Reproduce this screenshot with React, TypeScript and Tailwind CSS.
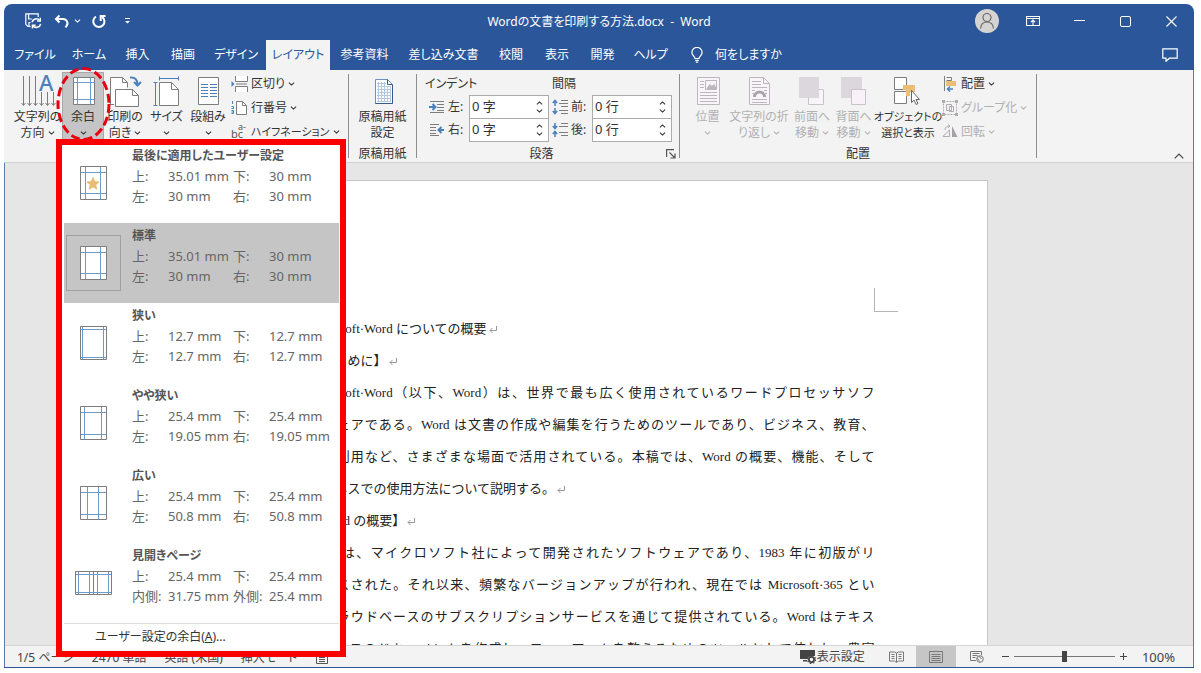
import type { ReactNode } from "react";

const GRAY = "#7d7d7d";
const BLUE = "#4a80bb";
const FADED = "#bdb6bd";

function Chevron({ className = "" }: { className?: string }) {
  return (
    <svg className={`inline-block h-1 w-[7px] shrink-0 ${className}`} viewBox="0 0 7 4" fill="none" stroke="currentColor" strokeWidth="1.1">
      <path d="M.9.6 3.5 3.1 6.1.6" />
    </svg>
  );
}

function BigButton({ width, icon, lines, menu = true, selected = false, disabled = false, compact = false }: {
  width: string; icon: ReactNode; lines: string[]; menu?: boolean; selected?: boolean; disabled?: boolean; compact?: boolean;
}) {
  return (
    <button
      type="button"
      disabled={disabled}
      className={`flex h-[68px] shrink-0 flex-col items-center whitespace-nowrap leading-4 ${width} ${compact ? "text-[11px]" : ""} ${selected ? "bg-[#c5c5c5] outline outline-1 -outline-offset-1 outline-[#a8a8a8]" : ""} ${disabled ? "text-[#b1b1b1]" : "text-[#333]"}`}
    >
      <span className="block h-[37px] shrink-0">{icon}</span>
      <span className="block">{lines[0]}</span>
      <span className="flex h-4 items-center justify-center gap-[3px]">
        {lines[1]}
        {menu && <Chevron />}
      </span>
    </button>
  );
}

function SmallButton({ icon, label, disabled = false, compact = false }: { icon: ReactNode; label: string; disabled?: boolean; compact?: boolean }) {
  return (
    <button type="button" disabled={disabled} className={`flex h-6 items-center gap-[3px] whitespace-nowrap ${compact ? "text-[11px]" : ""} ${disabled ? "text-[#b1b1b1]" : "text-[#333]"}`}>
      {icon}
      <span>{label}</span>
      <Chevron />
    </button>
  );
}

function Group({ name, label, width, launcher = false, children }: { name: string; label?: string; width: string; launcher?: boolean; children: ReactNode }) {
  return (
    <section aria-label={name} className={`flex shrink-0 pt-0.5 ${width}`}>
      <div className="flex min-w-0 grow flex-col">
        <div className="flex h-[74px] shrink-0">{children}</div>
        <div className="flex h-4 shrink-0 items-center leading-4">
          <span className="grow text-center">{label}</span>
          {launcher && (
            <button type="button" aria-label={`${name}の設定`} className="mr-[3px]">
              <svg className="size-[10px]" viewBox="0 0 10 10" fill="none" stroke="#555" strokeWidth="1.2">
                <path d="M.6 8V.6H8M3.5 3.5l5 5M9 4.5V9H4.5" />
              </svg>
            </button>
          )}
        </div>
      </div>
      <div className="mb-1 mt-0.5 w-px bg-[#8d8d8d]" />
    </section>
  );
}

function Field({ id, icon, label, value, className = "" }: { id: string; icon: ReactNode; label: string; value: string; className?: string }) {
  return (
    <div className={`flex items-center ${className}`}>
      <label htmlFor={id} className="flex w-10 items-center gap-[3px]">{icon}{label}</label>
      <div className="flex h-6 w-20 border border-[#ababab] bg-white">
        <input id={id} defaultValue={value} className="w-full min-w-0 bg-transparent pl-0.5 text-[13px] text-[#333] outline-none" />
        <span className="flex w-[18px] shrink-0 flex-col items-center justify-between py-1">
          <button type="button" aria-label={`${label}増やす`} className="flex h-1.5 items-center"><Chevron className="rotate-180" /></button>
          <button type="button" aria-label={`${label}減らす`} className="flex h-1.5 items-center"><Chevron /></button>
        </span>
      </div>
    </div>
  );
}

const tabs: [string, string][] = [
  ["ファイル", "w-14"], ["ホーム", "w-[52px]"], ["挿入", "w-[45px]"], ["描画", "w-[46px]"], ["デザイン", "w-[60px]"],
  ["レイアウト", "w-16"], ["参考資料", "w-[69px]"], ["差し込み文書", "w-[89px]"], ["校閲", "w-[46px]"],
  ["表示", "w-[46px]"], ["開発", "w-[45px]"], ["ヘルプ", "w-[51px]"],
];

function TitleBar() {
  return (
    <div className="grid h-[34px] grid-cols-[1fr_auto_1fr] items-center">
      <div className="flex items-center pl-[21px]">
        <button type="button" aria-label="上書き保存">
          <svg className="h-4 w-[17px]" viewBox="0 0 17 16" fill="none" stroke="currentColor" strokeWidth="1.2">
            <path d="M5.500 13.500H3L.8 11.300V.8h12.400v3.200M3.600 1v5h3.200M4 13.300V9.500h1.500" />
            <path d="M7 9.200a4.400 4.400 0 0 1 7.800-1.600M15.600 10.800a4.400 4.400 0 0 1-7.900 1.700" strokeWidth="1.500" />
            <path d="M15.300 4.800v3.200h-3.200M7.400 15.400v-3.200h3.200" strokeWidth="1.400" />
          </svg>
        </button>
        <button type="button" aria-label="元に戻す" className="ml-3">
          <svg className="h-[15px] w-4" viewBox="0 0 16 15" fill="none" stroke="currentColor" strokeWidth="2">
            <path d="M5.500 1.500 2 5l3.500 3.500M2.500 5h6.500a4.300 4.300 0 0 1 3.500 7l-1 1.300" />
          </svg>
        </button>
        <Chevron className="ml-1" />
        <button type="button" aria-label="繰り返し" className="ml-2.5">
          <svg className="h-[15px] w-4" viewBox="0 0 16 15" fill="none" stroke="currentColor" strokeWidth="2">
            <path d="M5 2.600A5.600 5.600 0 1 0 11 2.800" />
            <path d="M14.500 2H9.700v5" />
          </svg>
        </button>
        <button type="button" aria-label="クイック アクセス ツール バーのユーザー設定" className="ml-[17px]">
          <svg className="h-2 w-[7px]" viewBox="0 0 7 8"><path d="M1 1h5v1H1zM1 4h5L3.500 6.500z" fill="currentColor" /></svg>
        </button>
      </div>
      <h1 className="whitespace-pre pt-0.5">{"Wordの文書を印刷する方法.docx  -  Word"}</h1>
      <div className="flex items-center justify-end">
        <button type="button" aria-label="アカウント" className="mr-[11px]">
          <svg className="size-6" viewBox="0 0 24 24" fill="none" stroke="#666" strokeWidth="1.200">
            <circle cx="12" cy="12" r="12" fill="#d6d4d2" stroke="none" />
            <circle cx="12" cy="8.500" r="4" />
            <path d="M5.500 19.500c.3-4 2.800-6.500 6.500-6.500s6.200 2.500 6.500 6.500" />
          </svg>
        </button>
        <button type="button" aria-label="リボンの表示オプション" className="flex w-[46px] justify-center">
          <svg className="h-3 w-[14px]" viewBox="0 0 14 12" fill="none" stroke="currentColor"><path d="M.5 1.500h13v9H.5zM.5 3.500h13M7 10V5M4.800 7.200 7 5l2.200 2.200" strokeWidth="1.100" /></svg>
        </button>
        <button type="button" aria-label="最小化" className="flex w-[46px] justify-center">
          <svg className="h-3 w-[11px]" viewBox="0 0 11 12" stroke="currentColor"><path d="M0 5.500h11" /></svg>
        </button>
        <button type="button" aria-label="最大化" className="flex w-[46px] justify-center">
          <svg className="size-[11px]" viewBox="0 0 11 11" fill="none" stroke="currentColor"><rect x=".5" y=".5" width="10" height="10" rx="1.500" /></svg>
        </button>
        <button type="button" aria-label="閉じる" className="flex w-[46px] justify-center">
          <svg className="size-[11px]" viewBox="0 0 11 11" stroke="currentColor" strokeWidth="1.100"><path d="m.5.5 10 10M10.500.5l-10 10" /></svg>
        </button>
      </div>
    </div>
  );
}

function TabBar() {
  return (
    <nav className="flex h-8 items-end pl-[3px]">
      {tabs.map(([name, width]) => (
        <button
          key={name}
          type="button"
          className={`h-[30px] shrink-0 whitespace-nowrap text-center ${width} ${name === "レイアウト" ? "bg-[#f3f3f3] text-[#2b579a]" : ""}`}
        >
          {name}
        </button>
      ))}
      <button type="button" className="ml-[15px] flex h-[30px] items-center gap-3 whitespace-nowrap">
        <svg className="h-4 w-3" viewBox="0 0 12 16" fill="none" stroke="currentColor" strokeWidth="1.200">
          <path d="M4 11.500C4 9.500.9 8.500.9 5.500a5.100 5.100 0 0 1 10.200 0c0 3-3.100 4-3.100 6zM4.200 13.300h3.600M4.800 15.200h2.400" />
        </svg>
        何をしますか
      </button>
      <button type="button" aria-label="コメント" className="ml-auto mr-4 flex h-[30px] items-center">
        <svg className="h-[14px] w-4" viewBox="0 0 16 14" fill="none" stroke="currentColor" strokeWidth="1.200"><path d="M.8.8h14.400v9.400H7.500L4 13.300v-3.100H.8z" /></svg>
      </button>
    </nav>
  );
}

function PageSetupGroup() {
  return (
    <Group name="ページ設定" width="w-[345px]">
      <div className="flex pl-[9px]">
        <BigButton width="w-[49px]" lines={["文字列の", "方向"]} icon={
          <svg className="h-[37px] w-[50px]" viewBox="0 0 50 37" fill="none" stroke={GRAY} strokeWidth="1">
            <path d="M10.500 4v29M16.500 4v29M22.500 4v29M28.500 20v13M34.500 20v13M40.500 20v13" />
            <path d="m8.500 31 2 2.500 2-2.500m2 0 2 2.500 2-2.500m2 0 2 2.500 2-2.500m2 0 2 2.500 2-2.500m2 0 2 2.500 2-2.500m2 0 2 2.500 2-2.500" />
            <text x="26" y="19" fontSize="22" fontWeight="500" fill={BLUE} stroke="none">A</text>
          </svg>
        } />
        <BigButton width="w-[42px]" lines={["余白"]} selected icon={
          <svg className="h-[37px] w-[42px]" viewBox="0 0 42 37" fill="none">
            <path d="M11.500 5.500h21v27h-21z" fill="#fff" stroke={GRAY} />
            <path d="M15.500 6v26M28.500 6v26M12 10.500h20M12 27.500h20" stroke="#6c9bcb" />
          </svg>
        } />
        <BigButton width="w-[42px]" lines={["印刷の", "向き"]} icon={
          <svg className="h-[37px] w-[42px]" viewBox="0 0 42 37" fill="none" stroke={GRAY}>
            <path d="M10 32.500H6.500v-27h12l5 5v5" fill="#fff" />
            <path d="M18.500 5.500v5h5" />
            <path d="M11.500 17.500h17l6 6v11h-23z" fill="#fff" />
            <path d="M28.500 17.500v6h6" />
            <path d="M26 5.500c5-.5 7.500 2 7.500 7M30 10l3.500 3.500L37 10" stroke={BLUE} strokeWidth="2" />
          </svg>
        } />
        <BigButton width="w-[41px]" lines={["サイズ"]} icon={
          <svg className="h-[37px] w-[41px]" viewBox="0 0 41 37" fill="none" stroke={GRAY}>
            <path d="M13.500 10.500h12l7 7v16h-19z" fill="#fff" />
            <path d="M25.500 10.500v7h7" />
            <path d="M13.500 4.500v4M32.500 4.500v4M14 6.500h18M7.500 10.500h4M7.500 33.500h4M9.500 11v22" stroke={BLUE} />
          </svg>
        } />
        <BigButton width="w-[42px]" lines={["段組み"]} icon={
          <svg className="h-[37px] w-[42px]" viewBox="0 0 42 37" fill="none">
            <path d="M11.500 5.500h20v27h-20z" fill="#fff" stroke={GRAY} />
            <path d="M14 12.500h7M14 15.500h7M14 18.500h7M14 21.500h7M14 24.500h7M23 12.500h7M23 15.500h7M23 18.500h7M23 21.500h7M23 24.500h7" stroke={BLUE} />
          </svg>
        } />
        <div className="flex flex-col pl-0.5">
          <SmallButton label="区切り" icon={
            <svg className="h-4 w-[17px]" viewBox="0 0 17 16" fill="none" stroke={GRAY}>
              <path d="M4.500 0v5.500h12V0M4.500 16v-5.500h12V16" fill="#fff" /><path d="M5 8h11" />
              <path d="M.5 5v6l3-3z" fill={BLUE} stroke="none" />
            </svg>
          } />
          <SmallButton label="行番号" icon={
            <svg className="h-4 w-[17px]" viewBox="0 0 17 16" fill="none" stroke={GRAY}>
              <path d="M5.500 1.500h6l4 4v9h-10z" fill="#fff" /><path d="M11.500 1.500v4h4" />
              <path d="M1.500 1v3M.5 6.500h2v2h-2M.5 10.500h2v3h-2M.5 12h2" stroke={BLUE} />
            </svg>
          } />
          <SmallButton label="ハイフネーション" compact icon={
            <svg className="h-4 w-[17px]" viewBox="0 0 17 16" fill="#555">
              <text x="0" y="14" fontSize="11">bc</text><text x="7" y="6" fontSize="9">a-</text>
            </svg>
          } />
        </div>
      </div>
    </Group>
  );
}

function ParagraphGroup() {
  return (
    <Group name="段落" label="段落" width="w-[263px]" launcher>
      <div className="pl-2">
        <div className="h-[21px] leading-6">インデント</div>
        <Field id="indent-left" label="左:" value="0 字" className="mt-0.5 pl-1" icon={
          <svg className="h-3 w-4" viewBox="0 0 16 12" fill="none" stroke={GRAY}>
            <path d="M1 .5h14M8 3.500h7M8 6.500h7M8 9.500h7M1 11.500h14" /><path d="M0 6h6M3.500 3 6.500 6l-3 3" stroke={BLUE} strokeWidth="2" />
          </svg>
        } />
        <Field id="indent-right" label="右:" value="0 字" className="-mt-px pl-1" icon={
          <svg className="h-3 w-4" viewBox="0 0 16 12" fill="none" stroke={GRAY}>
            <path d="M1 .5h9M1 3.500h6M1 6.500h6M1 9.500h6M1 11.500h9" /><path d="M15 6H9.500M12.500 3l-3 3 3 3" stroke={BLUE} strokeWidth="2" />
          </svg>
        } />
      </div>
      <div className="pl-[3px]">
        <div className="h-[21px] leading-6">間隔</div>
        <Field id="space-before" label="前:" value="0 行" className="mt-0.5" icon={
          <svg className="h-4 w-4" viewBox="0 0 16 16" fill="none" stroke={GRAY}>
            <path d="M9 1.500h7M7 4.500h9M9 7.500h7M7 11.500h9M9 14.500h7" /><path d="M3 7V1.500M.8 4 3 1.500 5.200 4M3 9v5.500M.8 12 3 14.500 5.200 12" stroke={BLUE} strokeWidth="1.500" />
          </svg>
        } />
        <Field id="space-after" label="後:" value="0 行" className="-mt-px" icon={
          <svg className="h-4 w-4" viewBox="0 0 16 16" fill="none" stroke={GRAY}>
            <path d="M9 1.500h7M7 4.500h9M7 10.500h9M9 13.500h7" /><path d="M3 1v5.500M.8 4 3 6.500 5.200 4M3 15V9.500M.8 12 3 9.500 5.200 12" stroke={BLUE} strokeWidth="1.500" />
          </svg>
        } />
      </div>
    </Group>
  );
}

function ArrangeGroup() {
  return (
    <Group name="配置" label="配置" width="w-[357px]">
      <div className="flex pl-2">
        <BigButton width="w-[39px]" disabled lines={["位置"]} icon={
          <svg className="h-[37px] w-[38px]" viewBox="0 0 38 37" fill="none" stroke={FADED}>
            <path d="M8.500 5.500h22v27h-22z" fill="#f8f5f8" /><path d="M16.500 8.500h11v9h-11z" />
            <path d="m18 16.500 3-4 2 2 2-2 2 4z" fill={FADED} />
            <path d="M11 9.500h4M11 12.500h4M11 15.500h4M11 20.500h17M11 23.500h17M11 26.500h17M11 29.500h17" />
          </svg>
        } />
        <BigButton width="w-[64px]" disabled lines={["文字列の折", "り返し"]} icon={
          <svg className="h-[37px] w-[63px]" viewBox="0 0 63 37" fill="none" stroke={FADED}>
            <path d="M21.500 5.500h14l6 6v21h-20z" fill="#f8f5f8" /><path d="M35.500 5.500v6h6M24 9.500h9M24 12.500h9M24 15.500h15M24 27.500h15M24 30.500h15M24 18.500h3M36 18.500h3M24 21.500h2M37 21.500h2" />
            <path d="M26.500 25a5 5 0 0 1 10 0" strokeWidth="3" stroke="#a9a4a9" />
          </svg>
        } />
        <BigButton width="w-[42px]" disabled lines={["前面へ", "移動"]} icon={
          <svg className="h-[37px] w-[42px]" viewBox="0 0 42 37" fill="none" stroke="#c9c3c9">
            <path d="M17.500 17.500h15v15h-15z" fill="#f8f5f8" /><path d="M8 5h20v21H8z" fill="#dcd7dc" stroke="none" />
          </svg>
        } />
        <BigButton width="w-[41px]" disabled lines={["背面へ", "移動"]} icon={
          <svg className="h-[37px] w-[41px]" viewBox="0 0 41 37" fill="none" stroke="#c9c3c9">
            <path d="M8 5h21v21H8z" fill="#dcd7dc" stroke="none" /><path d="M18.500 17.500h14v15h-14z" fill="#f8f2f8" />
          </svg>
        } />
        <BigButton width="w-[68px]" menu={false} compact lines={["オブジェクトの", "選択と表示"]} icon={
          <svg className="h-[37px] w-[66px]" viewBox="0 0 66 37" fill="none" stroke={GRAY}>
            <path d="M19.500 5.500h12v12h-12zM19.500 19.500h12v12h-12z" fill="#fff" />
            <path d="M28 13h12v7h-5v4h-4v-6h-3z" fill="#eabf73" stroke="none" />
            <path d="M36.500 18.500v12l2.500-2.300 2.200 4.300 1.800-1-2-4h3.500z" fill="#fff" stroke="#666" />
          </svg>
        } />
        <div className="flex flex-col">
          <SmallButton label="配置" icon={
            <svg className="h-4 w-4" viewBox="0 0 16 16" fill="none" stroke={GRAY}>
              <path d="M2.500 0v15M4.500 1.500h5v3h-5" /><path d="M4 5h10v5H4z" fill="#eabf73" stroke="none" /><path d="M11 13H5.500M8 10.500 5.500 13 8 15.500" stroke={BLUE} strokeWidth="1.500" />
            </svg>
          } />
          <SmallButton label="グループ化" disabled icon={
            <svg className="h-4 w-4" viewBox="0 0 16 16" fill="none" stroke="#b1adb1">
              <path d="M1.500 1.500h13v13h-13z" strokeDasharray="2 1" /><path d="M4.500 4.500h5v6h-5zM7.500 6.500h4v5h-4z" /><path d="M0 0h3v3H0zM13 0h3v3h-3zM0 13h3v3H0zM13 13h3v3h-3z" fill="#b1adb1" stroke="none" />
            </svg>
          } />
          <SmallButton label="回転" disabled icon={
            <svg className="h-4 w-4" viewBox="0 0 16 16" fill="none" stroke="#b1adb1">
              <path d="M.8 12.500 7.500 6v6.500zM3 6c0-3 2-4 5-4M6 .5l2 1.500-2 2" /><path d="M10 2v11h5.500z" fill="#a5a1a5" stroke="none" />
            </svg>
          } />
        </div>
      </div>
    </Group>
  );
}

function Ribbon() {
  return (
    <div className="flex h-[93px] border-b border-[#d2d2d2] bg-[#f3f3f3] text-[#333]">
      <PageSetupGroup />
      <Group name="原稿用紙" label="原稿用紙" width="w-[68px]">
        <BigButton width="w-full" menu={false} lines={["原稿用紙", "設定"]} icon={
          <svg className="h-[37px] w-[36px]" viewBox="0 0 36 37" fill="none">
            <path d="M10.500 7.500h12l5 5v19h-17z" fill="#fff" stroke="#6f8fbd" />
            <path d="M12 11.500h9M12 14.500h14M12 17.500h14M12 20.500h14M12 23.500h14M12 26.500h14M12 29.500h14M13.500 10v20M16.500 10v20M19.500 10v20M22.500 14v16M25.500 14v16" stroke="#b5c8e2" />
            <path d="M22.500 7.500v5h5M27.500 13v18.500h-17" stroke="#35588f" />
          </svg>
        } />
      </Group>
      <ParagraphGroup />
      <ArrangeGroup />
      <button type="button" aria-label="リボンを折りたたむ" className="mb-[3px] ml-auto mr-[9px] self-end">
        <svg className="h-[6px] w-[10px]" viewBox="0 0 10 6" fill="none" stroke="#444" strokeWidth="1.200"><path d="M.7 5.300 5 1l4.300 4.300" /></svg>
      </button>
    </div>
  );
}

const bodyLines: { text: string; end?: boolean }[] = [
  { text: "Microsoft·Word についての概要", end: true },
  { text: "【はじめに】", end: true },
  { text: "Microsoft·Word（以下、Word）は、世界で最も広く使用されているワードプロセッサソフ" },
  { text: "トウェアである。Word は文書の作成や編集を行うためのツールであり、ビジネス、教育、" },
  { text: "個人利用など、さまざまな場面で活用されている。本稿では、Word の概要、機能、そして" },
  { text: "ビジネスでの使用方法について説明する。", end: true },
  { text: "【Word の概要】", end: true },
  { text: "Word は、マイクロソフト社によって開発されたソフトウェアであり、1983 年に初版がリ" },
  { text: "リースされた。それ以来、頻繁なバージョンアップが行われ、現在では Microsoft·365 とい" },
  { text: "うクラウドベースのサブスクリプションサービスを通じて提供されている。Word はテキス" },
  { text: "トベースのドキュメントを作成し、フォーマットを整えるためのツールとして使われ、豊富" },
];

function ReturnMark() {
  return (
    <svg className="ml-0.5 inline-block h-2 w-2" viewBox="0 0 8 8" fill="none" stroke="#999"><path d="M7.500 0v4.500H1M3.500 2 1 4.500 3.500 7" /></svg>
  );
}

function DocumentPage() {
  return (
    <main className="flex min-h-0 grow justify-center overflow-hidden bg-[#e6e6e6] pr-[15px] pt-[17px]">
      <article className="relative h-[1118px] w-[792px] shrink-0 border border-[#c6c6c6] bg-white px-[112px] pt-[132px] font-['Liberation_Serif','Noto_Sans_CJK_JP',serif] text-[13px] font-normal leading-8 text-[#222] [font-feature-settings:normal]">
        <span className="absolute right-[89px] top-[107px] size-6 border-b border-l border-[#b5b5b5]" />
        <span className="absolute left-[89px] top-[107px] size-6 border-b border-r border-[#b5b5b5]" />
        {bodyLines.map((line) => (
          <p key={line.text} className={`whitespace-nowrap ${line.end ? "" : "text-justify [text-align-last:justify]"}`}>
            {line.text}
            {line.end && <ReturnMark />}
          </p>
        ))}
      </article>
    </main>
  );
}

function StatusBar() {
  return (
    <footer className="flex h-[22px] shrink-0 items-center whitespace-nowrap border-t border-[#d5d5d5] bg-[#f3f3f3] text-[#444]">
      <div className="flex grow items-center gap-[18px] pl-3 pt-0.5">
        <span>1/5 ページ</span>
        <span>2470 単語</span>
        <span>英語 (米国)</span>
        <span>挿入モード</span>
        <svg className="h-3 w-3" viewBox="0 0 12 12" fill="none" stroke="#555"><path d="M.5 2.500h11v9H.5zM3 5.500h6M3 7.500h6M3 9.500h6" /></svg>
      </div>
      <button type="button" className="mr-6 flex items-center">
        <svg className="h-[14px] w-[17px]" viewBox="0 0 17 14">
          <path d="M0 0h15v6H10L7 9H0zM3 10h4v1.500H3z" fill="#444" />
          <circle cx="11.500" cy="9.500" r="2.600" fill="#f3f3f3" stroke="#444" strokeWidth="1.800" />
          <circle cx="11.500" cy="9.500" r="4" fill="none" stroke="#444" strokeWidth="1.200" strokeDasharray="1.600 1.540" />
        </svg>
        表示設定
      </button>
      <button type="button" aria-label="閲覧モード" className="mr-3">
        <svg className="h-3 w-[15px]" viewBox="0 0 15 12" fill="none" stroke="#777"><path d="M.5 1h5l2 1 2-1h5v9h-5l-2 1.500-2-1.500h-5zM7.500 2v9M2.500 3.500h3M2.500 5.500h3M2.500 7.500h3M9.500 3.500h3M9.500 5.500h3M9.500 7.500h3" /></svg>
      </button>
      <button type="button" aria-label="印刷レイアウト" className="flex h-full w-10 items-center justify-center bg-[#c6c6c6]">
        <svg className="h-3 w-[14px]" viewBox="0 0 14 12" fill="none" stroke="#777"><path d="M.5.500h13v11H.5zM2.500 3.500h9M2.500 5.500h9M2.500 7.500h9M2.500 9.500h9" /></svg>
      </button>
      <button type="button" aria-label="Web レイアウト" className="ml-3.5">
        <svg className="h-3 w-[14px]" viewBox="0 0 14 12" fill="none" stroke="#777"><path d="M6 9.500H.5v-9h11V4M2.500 2.500h7M2.500 4.500h5M2.500 6.500h3" /><circle cx="10" cy="8" r="3.300" /><path d="M7 7.500c2 0 1.500 2 3 3M9 5c0 2 2 1 2.500 3" /></svg>
      </button>
      <button type="button" aria-label="縮小" className="ml-[17px]">
        <svg className="h-[9px] w-[9px]" viewBox="0 0 9 9" stroke="#444"><path d="M1 4.500h7" /></svg>
      </button>
      <input
        type="range"
        aria-label="ズーム"
        min={10}
        max={190}
        defaultValue={100}
        className="mx-1 h-3 w-[101px] appearance-none bg-[linear-gradient(#777,#777)] bg-[length:100%_1px] bg-center bg-no-repeat [&::-webkit-slider-thumb]:h-[11px] [&::-webkit-slider-thumb]:w-[5px] [&::-webkit-slider-thumb]:appearance-none [&::-webkit-slider-thumb]:bg-[#444]"
      />
      <button type="button" aria-label="拡大">
        <svg className="h-[9px] w-[9px]" viewBox="0 0 9 9" stroke="#444"><path d="M1 4.500h7M4.500 1v7" /></svg>
      </button>
      <span className="ml-3.5 mr-[18px] pt-0.5 text-[13px]">100%</span>
    </footer>
  );
}

interface Preset {
  name: string;
  values: [string, string, string, string];
  guides: string;
  star?: boolean;
  mirrored?: boolean;
}

const presets: Preset[] = [
  { name: "最後に適用したユーザー設定", values: ["35.01 mm", "30 mm", "30 mm", "30 mm"], guides: "M5.500 1v32M20.500 1v32M1 6.500h25M1 27.500h25", star: true },
  { name: "標準", values: ["35.01 mm", "30 mm", "30 mm", "30 mm"], guides: "M5.500 1v32M20.500 1v32M1 6.500h25M1 27.500h25" },
  { name: "狭い", values: ["12.7 mm", "12.7 mm", "12.7 mm", "12.7 mm"], guides: "M2.500 1v32M23.500 1v32M1 3.500h25M1 31.500h25" },
  { name: "やや狭い", values: ["25.4 mm", "25.4 mm", "19.05 mm", "19.05 mm"], guides: "M4.500 1v32M21.500 1v32M1 6.500h25M1 28.500h25" },
  { name: "広い", values: ["25.4 mm", "25.4 mm", "50.8 mm", "50.8 mm"], guides: "M7.500 1v32M18.500 1v32M1 6.500h25M1 28.500h25" },
  { name: "見開きページ", values: ["25.4 mm", "25.4 mm", "31.75 mm", "25.4 mm"], guides: "", mirrored: true },
];

function PresetIcon({ preset }: { preset: Preset }) {
  if (preset.mirrored) {
    return (
      <svg className="h-6 w-[37px]" viewBox="0 0 37 24" fill="none">
        <path d="M.5.500h36v23H.5zM18.500 1v22" fill="#fff" stroke={GRAY} />
        <path d="M3.500 1v22M14.500 1v22M22.500 1v22M33.500 1v22M1 3.500h35M1 21.500h35" stroke="#6c9bcb" />
      </svg>
    );
  }
  return (
    <svg className="h-[34px] w-[27px]" viewBox="0 0 27 34" fill="none">
      <path d="M.5.500h26v33H.5z" fill="#fff" stroke={GRAY} />
      <path d={preset.guides} stroke="#6c9bcb" />
      {preset.star && <path d="m13 11.500 1.700 4.200 4.300.3-3.400 2.800 1.200 4.300L13 20.700l-3.800 2.400 1.200-4.300L7 16l4.300-.3z" fill="#e8bc72" stroke="#e8bc72" />}
    </svg>
  );
}

function MarginsMenu() {
  return (
    <div role="menu" aria-label="余白" className="w-full rounded-b bg-white px-0.5 text-[13px] text-[#666]">
      {presets.map((preset) => {
        const active = preset.name === "標準";
        const labels = preset.mirrored ? ["上:", "下:", "内側:", "外側:"] : ["上:", "下:", "左:", "右:"];
        return (
          <button key={preset.name} type="button" role="menuitem" className={`flex h-20 w-full items-start text-left ${active ? "bg-[#c5c5c5]" : ""}`}>
            <span className={`ml-0.5 mt-3 flex h-14 w-[55px] shrink-0 items-center justify-center ${active ? "border border-[#a0a0a0]" : ""}`}>
              <PresetIcon preset={preset} />
            </span>
            <span className="ml-[11px] mt-[3px] grid grid-cols-[36px_65px_36px_auto] whitespace-nowrap leading-5">
              <span className="col-span-4 text-xs font-bold leading-5 text-[#555]">{preset.name}</span>
              {preset.values.map((value, i) => (
                <span key={i} className="contents">
                  <span>{labels[i]}</span>
                  <span>{value}</span>
                </span>
              ))}
            </span>
          </button>
        );
      })}
      <button type="button" role="menuitem" className="flex h-[27px] w-full items-center border-t border-[#dcdcdc] pl-[31px] text-xs text-[#333]">
        ユーザー設定の余白(<u>A</u>)...
      </button>
    </div>
  );
}

export default function App() {
  return (
    <div className="h-screen overflow-hidden bg-white pb-[5px] pl-1 pr-[7px] pt-1 font-['Noto_Sans','Noto_Sans_CJK_JP',sans-serif] text-xs [font-feature-settings:'palt']">
      <div className="relative flex h-full flex-col rounded-t-lg border-b border-[#2b579a]">
        <header className="shrink-0 rounded-t-lg bg-[#2b579a] text-white">
          <TitleBar />
          <TabBar />
        </header>
        <div className="flex min-h-0 grow flex-col border-x border-[#5b7ba9]">
          <div className="-ml-px shrink-0"><Ribbon /></div>
          <DocumentPage />
          <StatusBar />
        </div>
        <div className="absolute left-[58px] top-[139px] w-[279px]">
          <MarginsMenu />
        </div>
        <svg className="pointer-events-none absolute left-[51px] top-[62px] h-[78px] w-[58px]" viewBox="0 0 58 78" fill="none" stroke="#e60012" strokeWidth="3" strokeDasharray="9 4">
          <ellipse cx="28.500" cy="38" rx="25.500" ry="35.500" />
        </svg>
        <div className="pointer-events-none absolute left-[52px] top-[135px] h-[518px] w-[290px] border-[6px] border-[#fb0000]" />
      </div>
    </div>
  );
}
